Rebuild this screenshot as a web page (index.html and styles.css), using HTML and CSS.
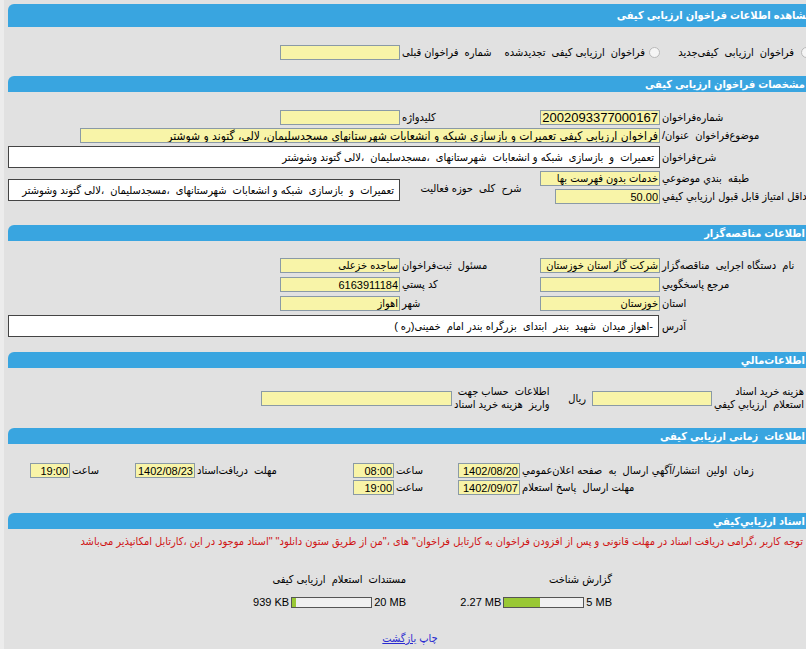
FILE: index.html
```html
<!DOCTYPE html>
<html lang="fa">
<head>
  <meta charset="UTF-8" />
  <meta name="viewport" content="width=device-width, initial-scale=1.0"/>
  <title>مشاهده اطلاعات فراخوان ارزیابی کیفی</title>
  <link rel="stylesheet" href="styles.css">
</head>
<body>
  <div class="page">

    <!-- مشاهده -->
    <div class="bar bar-main">مشاهده اطلاعات فراخوان ارزیابی کیفی</div>
    <div class="section section-top">
      <div class="choice-row">
        <div class="choice choice-new"><span class="radio"></span>فراخوان&nbsp; ارزیابی&nbsp; کیفی‌جدید</div>
        <div class="choice choice-renew"><span class="radio"></span>فراخوان&nbsp; ارزیابی کیفی&nbsp; تجدیدشده</div>
        <div class="lbl lbl-prev">شماره&nbsp; فراخوان قبلی</div>
        <input class="field" type="text" readonly value="">
      </div>
    </div>

    <!-- مشخصات فراخوان -->
    <div class="bar">مشخصات فراخوان ارزیابی کیفی</div>
    <div class="section section-call">
      <div class="form-grid">
        <div class="lbl lbl-main">شماره‌فراخوان</div>
        <input class="field field-number" type="text" readonly value="2002093377000167">
        <div class="lbl">کلیدواژه</div>
        <input class="field" type="text" readonly value="">

        <div class="lbl lbl-main">موضوع‌فراخوان&nbsp; عنوان/</div>
        <input class="field field-title" type="text" readonly value="فراخوان ارزیابی کیفی تعمیرات و بازسازی شبکه و انشعابات شهرستانهای مسجدسلیمان، لالی، گتوند و شوشتر">

        <div class="lbl lbl-main">شرح‌فراخوان</div>
        <div class="box box-wide">تعمیرات&nbsp; و&nbsp; بازسازی&nbsp; شبکه و انشعابات&nbsp; شهرستانهای&nbsp; ،مسجدسلیمان&nbsp; ،لالی گتوند وشوشتر</div>

        <div class="lbl lbl-main">طبقه&nbsp; بندي موضوعي</div>
        <input class="field" type="text" readonly value="خدمات بدون فهرست بها">
        <div class="lbl lbl-center">شرح&nbsp; کلی&nbsp; حوزه فعالیت</div>
        <div class="box box-scope">تعمیرات&nbsp; و&nbsp; بازسازی&nbsp; شبکه و انشعابات&nbsp; شهرستانهای&nbsp; ،مسجدسلیمان&nbsp; ،لالی گتوند وشوشتر</div>

        <div class="lbl lbl-main">حداقل امتیاز قابل قبول ارزيابي کيفي</div>
        <input class="field field-score" type="text" readonly value="50.00">
      </div>
    </div>

    <!-- مناقصه‌گزار -->
    <div class="bar">اطلاعات مناقصه‌گزار</div>
    <div class="section section-org">
      <div class="form-grid form-grid-loose">
        <div class="lbl lbl-main">نام&nbsp; دستگاه اجرایی&nbsp; مناقصه‌گزار</div>
        <input class="field" type="text" readonly value="شرکت گاز استان خوزستان">
        <div class="lbl">مسئول&nbsp; ثبت‌فراخوان</div>
        <input class="field" type="text" readonly value="ساجده خزعلی">

        <div class="lbl lbl-main">مرجع پاسخگويي</div>
        <input class="field" type="text" readonly value="">
        <div class="lbl">کد پستي</div>
        <input class="field" type="text" readonly value="6163911184">

        <div class="lbl lbl-main">استان</div>
        <input class="field" type="text" readonly value="خوزستان">
        <div class="lbl">شهر</div>
        <input class="field" type="text" readonly value="اهواز">

        <div class="lbl lbl-main">آدرس</div>
        <div class="box box-address">-اهواز میدان&nbsp; شهید&nbsp; بندر&nbsp; ابتدای&nbsp; بزرگراه بندر امام&nbsp; خمینی(ره )</div>
      </div>
    </div>

    <!-- مالی -->
    <div class="bar">اطلاعات‌مالي</div>
    <div class="section section-money">
      <div class="money-row">
        <div class="lbl lbl-fee">هزینه خرید اسناد<br>استعلام&nbsp; ارزيابي كيفي</div>
        <input class="field" type="text" readonly value="">
        <div class="unit">ريال</div>
        <div class="lbl lbl-account">اطلاعات&nbsp; حساب جهت<br>واریز&nbsp; هزینه خرید اسناد</div>
        <input class="field field-account" type="text" readonly value="">
      </div>
    </div>

    <!-- زمان‌بندی -->
    <div class="bar">اطلاعات&nbsp; زمانی ارزیابی کیفی</div>
    <div class="section section-time">
      <div class="time-grid">
        <div class="lbl">زمان&nbsp; اولین&nbsp; انتشار/آگهي ارسال&nbsp; به&nbsp; صفحه اعلان‌عمومي</div>
        <input class="field" type="text" readonly value="1402/08/20">
        <div class="lbl">ساعت</div>
        <input class="field" type="text" readonly value="08:00">
        <div class="lbl">مهلت&nbsp; دریافت‌اسناد</div>
        <input class="field" type="text" readonly value="1402/08/23">
        <div class="lbl">ساعت</div>
        <input class="field" type="text" readonly value="19:00">

        <div class="lbl lbl-first">مهلت ارسال&nbsp; پاسخ استعلام</div>
        <input class="field" type="text" readonly value="1402/09/07">
        <div class="lbl">ساعت</div>
        <input class="field" type="text" readonly value="19:00">
      </div>
    </div>

    <!-- اسناد -->
    <div class="bar">اسناد ارزيابي‌كيفي</div>
    <div class="section section-docs">
      <div class="notice">توجه کاربر ،گرامی دریافت اسناد در مهلت قانونی و پس از افزودن فراخوان به کارتابل فراخوان" های ،"من از طریق ستون دانلود" "اسناد موجود در این ،کارتابل امکانپذیر می‌باشد</div>

      <div class="docs">
        <div class="doc">
          <div class="doc-title">گزارش شناخت</div>
          <div class="usage">
            <span>2.27 MB</span>
            <span class="meter"><span class="meter-fill" style="width: 45%"></span></span>
            <span>5 MB</span>
          </div>
        </div>
        <div class="doc">
          <div class="doc-title">مستندات&nbsp; استعلام&nbsp; ارزیابی کیفی</div>
          <div class="usage">
            <span>939 KB</span>
            <span class="meter"><span class="meter-fill" style="width: 5%"></span></span>
            <span>20 MB</span>
          </div>
        </div>
      </div>

      <div class="links">
        <a href="#" class="link">چاپ</a>
        <a href="#" class="link link-back">بازگشت</a>
      </div>
    </div>

  </div>
</body>
</html>
```

FILE: styles.css
```css
html,
body {
  margin: 0;
  overflow: hidden;
}

body {
  background-color: #ececec;
  font-family: "Liberation Sans", "DejaVu Sans Condensed", "DejaVu Sans", sans-serif;
  font-size: 11px;
  color: #000;
}

.page {
  direction: rtl;
  width: 804px;
  min-height: 700px;
  margin-left: 4px;
  padding: 4px 0 0 4px;
  background-color: #e1e1e1;
}

/* سرتیترها */
.bar {
  height: 16px;
  line-height: 16px;
  padding-right: 7px;
  background-color: #39a5e0;
  border-radius: 6px 6px 0 0;
  color: #fff;
  font-weight: bold;
  font-size: 11px;
  white-space: nowrap;
  overflow: hidden;
}

.bar-main {
  height: 23px;
  line-height: 23px;
  padding-right: 0;
}

.section-top { padding: 18px 0 16px; }
.section-call { padding: 18px 0 21px; }
.section-org { padding: 17px 0 15px; }
.section-money { padding: 17px 0; }
.section-time { padding: 19px 0 18px; }
.section-docs { padding: 5px 0 0; }

/* فیلدها */
.field {
  box-sizing: border-box;
  width: 120px;
  height: 15px;
  margin: 0;
  padding: 0 1px;
  border: 1px solid #8a9aa6;
  background-color: #f8f4a8;
  font-family: "Liberation Sans", "DejaVu Sans Condensed", "DejaVu Sans", sans-serif;
  font-size: 11px;
  color: #000;
  direction: rtl;
  outline: none;
}

.lbl {
  display: flex;
  justify-content: flex-end;
  line-height: 15px;
  padding-left: 2px;
  white-space: nowrap;
}

.box {
  box-sizing: border-box;
  height: 22px;
  line-height: 20px;
  padding-right: 5px;
  border: 1px solid #444;
  background-color: #fff;
  white-space: nowrap;
  overflow: hidden;
}

/* ردیف گزینه‌ها */
.choice-row {
  display: flex;
  align-items: center;
}

.choice {
  display: flex;
  align-items: center;
  white-space: nowrap;
}

.choice-new { width: 152px; }
.choice-renew { width: 170px; }
.choice-new .radio { margin-left: 7px; }
.choice-renew .radio { margin-left: 4px; }

.radio {
  box-sizing: border-box;
  width: 11px;
  height: 11px;
  border: 1px solid #b9b9b9;
  border-radius: 50%;
  background-color: #f5f5f5;
}

.lbl-prev { width: 88px; }

/* جدول اطلاعات */
.form-grid {
  display: grid;
  grid-template-columns: 152px 120px 140px 121px 1fr;
  row-gap: 3px;
  align-items: center;
}

.form-grid-loose {
  row-gap: 4px;
}

.lbl-main {
  grid-column: 1;
}

.field-number {
  font-size: 13px;
}

.field-title {
  grid-column: 2 / -1;
  width: auto;
  margin-left: 72px;
  font-size: 12px;
}

.field-score {
  width: 105px;
}

.box-wide {
  grid-column: 2 / -1;
}

.box-address {
  grid-column: 2 / -1;
  margin-right: 1px;
}

.lbl-center {
  grid-column: 3;
  grid-row: span 2;
  justify-content: center;
  margin-top: 2px;
}

.box-scope {
  grid-column: 4 / -1;
  grid-row: span 2;
  align-self: center;
  margin-top: 5px;
  margin-bottom: 1px;
}

/* مالی */
.money-row {
  display: flex;
  align-items: center;
  height: 26px;
}

.money-row .lbl {
  line-height: 13px;
}

.lbl-fee {
  flex-direction: column;
  align-items: flex-end;
  width: 98px;
}

.unit {
  width: 40px;
  padding-right: 6px;
}

.lbl-account {
  flex-direction: column;
  align-items: flex-end;
  width: 92px;
}

.field-account {
  width: 191px;
}

/* زمان‌بندی */
.time-grid {
  display: grid;
  grid-template-columns: 292px 62px 64px 41px 158px 60px 65px 40px 1fr;
  row-gap: 2px;
  align-items: center;
}

.time-grid .field {
  width: 100%;
}

.time-grid .lbl-first {
  grid-column: 1;
}

/* اسناد */
.notice {
  padding-right: 9px;
  line-height: 14px;
  color: #d01414;
  white-space: nowrap;
}

.docs {
  display: grid;
  grid-template-columns: 200px 206px 206px;
  margin-top: 24px;
}

.doc {
  display: flex;
  flex-direction: column;
  align-items: flex-start;
}

.doc:first-child {
  grid-column: 2;
}

.doc-title {
  line-height: 14px;
}

.usage {
  display: flex;
  align-items: center;
  gap: 2px;
  margin-top: 9px;
  direction: ltr;
  line-height: 14px;
}

.meter {
  box-sizing: border-box;
  width: 81px;
  height: 11px;
  border: 1px solid #555;
  background-color: #f0f0f0;
}

.meter-fill {
  display: block;
  height: 100%;
  background-color: #99c835;
}

.links {
  margin-top: 22px;
  text-align: center;
  line-height: 14px;
}

.link {
  color: #2a2ad0;
  text-decoration: none;
}

.link-back {
  text-decoration: underline;
}
```
